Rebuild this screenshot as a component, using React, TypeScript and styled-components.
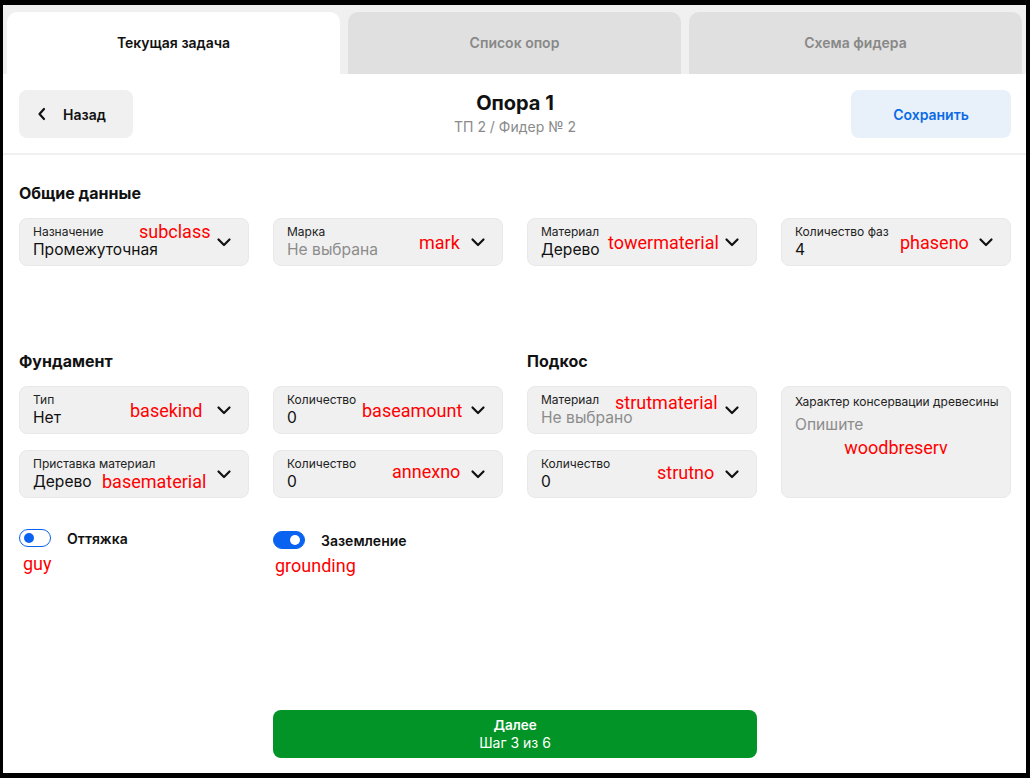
import React from "react";
import styled, { createGlobalStyle } from "styled-components";

const GlobalStyle = createGlobalStyle`
  html, body { margin: 0; padding: 0; background: #000; }
  body { font-family: Inter, "Noto Sans", sans-serif; color: #111; }
  * { box-sizing: border-box; }
`;

const Frame = styled.div`
  margin: 5px 4px 5px 3px;
  height: 768px;
  background: #fff;
  display: flex;
  flex-direction: column;
  overflow: hidden;
`;

const TabBar = styled.div`
  display: flex;
  gap: 8px;
  padding: 7px 4px 0 4px;
  background: #f0f0f0;
`;

const Tab = styled.div<{ $active?: boolean }>`
  flex: 1;
  height: 62px;
  padding-bottom: 1px;
  border-radius: 10px 10px 0 0;
  background: ${(p) => (p.$active ? "#fff" : "#e0e0e0")};
  color: ${(p) => (p.$active ? "#111" : "#888")};
  font-size: 14px;
  font-weight: 600;
  display: flex;
  align-items: center;
  justify-content: center;
`;

const Header = styled.div`
  display: grid;
  grid-template-columns: 1fr auto 1fr;
  align-items: center;
  padding: 16px 15px 15px 16px;
  border-bottom: 2px solid #f0f0f0;
`;

const BackButton = styled.button`
  justify-self: start;
  width: 114px;
  height: 48px;
  border: none;
  border-radius: 8px;
  background: #f0f0f0;
  display: flex;
  align-items: center;
  gap: 16px;
  padding: 0 0 0 18px;
  font-family: inherit;
  font-size: 14px;
  font-weight: 600;
  color: #111;
`;

const SaveButton = styled.button`
  justify-self: end;
  width: 160px;
  height: 48px;
  border: none;
  border-radius: 8px;
  background: #e8f1fa;
  font-family: inherit;
  font-size: 14px;
  font-weight: 600;
  color: #0b6be6;
`;

const TitleBlock = styled.div`
  display: flex;
  flex-direction: column;
  align-items: center;
  gap: 5px;
`;

const Title = styled.div`
  font-size: 20px;
  font-weight: 700;
  line-height: 20px;
  color: #111;
`;

const Subtitle = styled.div`
  font-size: 14px;
  line-height: 18px;
  color: #8a8a8a;
`;

const Content = styled.div`
  flex: 1;
  padding: 29px 15px 15px 16px;
  display: flex;
  flex-direction: column;
`;

const Grid = styled.div<{ $mt?: number }>`
  display: grid;
  grid-template-columns: repeat(4, 230px);
  column-gap: 24px;
  row-gap: 16px;
  margin-top: ${(p) => p.$mt ?? 0}px;
`;

const SectionTitle = styled.div<{ $col: string }>`
  grid-column: ${(p) => p.$col};
  font-size: 16px;
  font-weight: 700;
  line-height: 19px;
  color: #111;
  margin-bottom: -1px;
`;

const FieldBox = styled.div<{ $col?: string; $row?: string; $tall?: boolean }>`
  position: relative;
  grid-column: ${(p) => p.$col ?? "auto"};
  grid-row: ${(p) => p.$row ?? "auto"};
  height: ${(p) => (p.$tall ? "112px" : "48px")};
  background: #f0f0f0;
  border: 1px solid #e8e8e8;
  border-radius: 8px;
  display: flex;
  align-items: ${(p) => (p.$tall ? "flex-start" : "center")};
  padding: 0 12px 0 13px;
`;

const FieldText = styled.div<{ $tall?: boolean }>`
  flex: 1;
  align-self: flex-start;
  padding-top: ${(p) => (p.$tall ? 7 : 5)}px;
  display: flex;
  flex-direction: column;
  gap: ${(p) => (p.$tall ? 5 : 0)}px;
`;

const FieldLabel = styled.div`
  font-size: 12px;
  line-height: 15px;
  color: #222;
  white-space: nowrap;
`;

const FieldValue = styled.div<{ $placeholder?: boolean }>`
  font-size: 15.6px;
  line-height: 21px;
  color: ${(p) => (p.$placeholder ? "#8c8c8c" : "#111")};
  white-space: nowrap;
`;

const Note = styled.span<{ $left?: number; $top: number; $center?: boolean }>`
  position: absolute;
  top: ${(p) => p.$top}px;
  ${(p) => (p.$center ? "left: 0; right: 0; text-align: center;" : `left: ${p.$left}px;`)}
  font-family: Roboto, "Liberation Sans", sans-serif;
  font-size: 18px;
  line-height: 22px;
  color: #ff0000;
  white-space: nowrap;
  pointer-events: none;
`;

const ChevronBox = styled.span`
  width: 24px;
  height: 24px;
  display: flex;
  align-items: center;
  justify-content: center;
`;

const Chevron = () => (
  <svg width="24" height="24" viewBox="0 0 24 24" fill="none" stroke="#111" strokeWidth="2.2" strokeLinecap="round" strokeLinejoin="round">
    <path d="M6.5 9.5 12 15l5.5-5.5" />
  </svg>
);

type FieldProps = {
  label: string;
  value: string;
  placeholder?: boolean;
  note: string;
  noteLeft?: number;
  noteTop: number;
  col?: string;
  row?: string;
};

const SelectField = ({ label, value, placeholder, note, noteLeft, noteTop, col, row }: FieldProps) => (
  <FieldBox $col={col} $row={row}>
    <FieldText>
      <FieldLabel>{label}</FieldLabel>
      <FieldValue $placeholder={placeholder}>{value}</FieldValue>
    </FieldText>
    <ChevronBox>
      <Chevron />
    </ChevronBox>
    <Note $left={noteLeft} $top={noteTop}>{note}</Note>
  </FieldBox>
);

const ToggleCell = styled.div<{ $col: string }>`
  grid-column: ${(p) => p.$col};
  display: flex;
  flex-direction: column;
  gap: 6px;
`;

const ToggleRow = styled.div<{ $shift?: number }>`
  display: flex;
  align-items: center;
  gap: 16px;
  margin-top: ${(p) => p.$shift ?? 0}px;
`;

const Switch = styled.span<{ $on?: boolean }>`
  position: relative;
  width: 32px;
  height: 18px;
  border-radius: 9px;
  border: 1.5px solid #0a63f0;
  background: ${(p) => (p.$on ? "#0a63f0" : "#fff")};
  flex-shrink: 0;
`;

const Knob = styled.span<{ $on?: boolean }>`
  position: absolute;
  top: 2.5px;
  ${(p) => (p.$on ? "right: 4px;" : "left: 4px;")}
  width: 10px;
  height: 10px;
  border-radius: 50%;
  background: ${(p) => (p.$on ? "#fff" : "#0a63f0")};
`;

const ToggleLabel = styled.span`
  font-size: 14px;
  font-weight: 600;
  color: #111;
`;

const ToggleNote = styled.span<{ $indent: number }>`
  font-family: Roboto, "Liberation Sans", sans-serif;
  font-size: 18px;
  line-height: 22px;
  color: #ff0000;
  padding-left: ${(p) => p.$indent}px;
`;

const Footer = styled.div`
  margin-top: auto;
  display: grid;
  grid-template-columns: repeat(4, 230px);
  column-gap: 24px;
`;

const NextButton = styled.button`
  grid-column: 2 / 4;
  height: 48px;
  border: none;
  border-radius: 8px;
  background: #029426;
  color: #fff;
  font-family: inherit;
  display: flex;
  flex-direction: column;
  align-items: center;
  justify-content: center;
  gap: 1px;
`;

const NextTitle = styled.span`
  font-size: 13.5px;
  font-weight: 600;
  line-height: 16px;
`;

const NextSub = styled.span`
  font-size: 14px;
  line-height: 17px;
`;

export default function App() {
  return (
    <>
      <GlobalStyle />
      <Frame>
        <TabBar>
          <Tab $active>Текущая задача</Tab>
          <Tab>Список опор</Tab>
          <Tab>Схема фидера</Tab>
        </TabBar>
        <Header>
          <BackButton>
            <svg width="10" height="14" viewBox="0 0 10 14" fill="none" stroke="#111" strokeWidth="2.2" strokeLinecap="round" strokeLinejoin="round">
              <path d="M7 2 2.5 7 7 12" />
            </svg>
            Назад
          </BackButton>
          <TitleBlock>
            <Title>Опора 1</Title>
            <Subtitle>ТП 2 / Фидер № 2</Subtitle>
          </TitleBlock>
          <SaveButton>Сохранить</SaveButton>
        </Header>
        <Content>
          <Grid>
            <SectionTitle $col="1 / -1">Общие данные</SectionTitle>
            <SelectField label="Назначение" value="Промежуточная" note="subclass" noteLeft={119} noteTop={2} />
            <SelectField label="Марка" value="Не выбрана" placeholder note="mark" noteLeft={145} noteTop={13} />
            <SelectField label="Материал" value="Дерево" note="towermaterial" noteLeft={80} noteTop={13} />
            <SelectField label="Количество фаз" value="4" note="phaseno" noteLeft={118} noteTop={13} />
          </Grid>
          <Grid $mt={86}>
            <SectionTitle $col="1 / 3">Фундамент</SectionTitle>
            <SectionTitle $col="3 / 5">Подкос</SectionTitle>
            <SelectField col="1" row="2" label="Тип" value="Нет" note="basekind" noteLeft={110} noteTop={13} />
            <SelectField col="2" row="2" label="Количество" value="0" note="baseamount" noteLeft={88} noteTop={13} />
            <SelectField col="3" row="2" label="Материал" value="Не выбрано" placeholder note="strutmaterial" noteLeft={87} noteTop={5} />
            <FieldBox $col="4" $row="2 / 4" $tall>
              <FieldText $tall>
                <FieldLabel>Характер консервации древесины</FieldLabel>
                <FieldValue $placeholder>Опишите</FieldValue>
              </FieldText>
              <Note $center $top={50}>woodbreserv</Note>
            </FieldBox>
            <SelectField col="1" row="3" label="Приставка материал" value="Дерево" note="basematerial" noteLeft={82} noteTop={20} />
            <SelectField col="2" row="3" label="Количество" value="0" note="annexno" noteLeft={118} noteTop={10} />
            <SelectField col="3" row="3" label="Количество" value="0" note="strutno" noteLeft={129} noteTop={11} />
          </Grid>
          <Grid $mt={31}>
            <ToggleCell $col="1">
              <ToggleRow>
                <Switch>
                  <Knob />
                </Switch>
                <ToggleLabel>Оттяжка</ToggleLabel>
              </ToggleRow>
              <ToggleNote $indent={4}>guy</ToggleNote>
            </ToggleCell>
            <ToggleCell $col="2">
              <ToggleRow $shift={2}>
                <Switch $on>
                  <Knob $on />
                </Switch>
                <ToggleLabel>Заземление</ToggleLabel>
              </ToggleRow>
              <ToggleNote $indent={2}>grounding</ToggleNote>
            </ToggleCell>
          </Grid>
          <Footer>
            <NextButton>
              <NextTitle>Далее</NextTitle>
              <NextSub>Шаг 3 из 6</NextSub>
            </NextButton>
          </Footer>
        </Content>
      </Frame>
    </>
  );
}
